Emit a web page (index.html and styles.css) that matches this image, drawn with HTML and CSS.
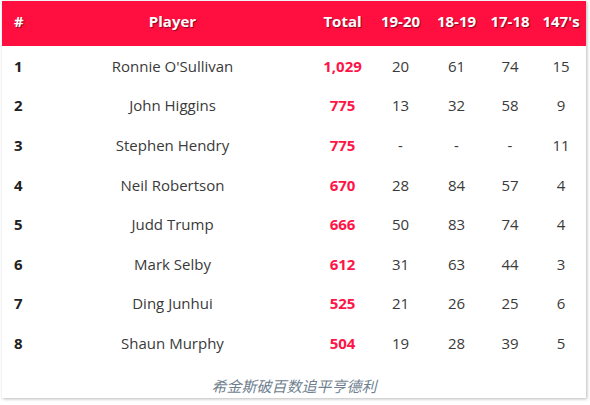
FILE: index.html
```html
<!DOCTYPE html>
<html lang="en">
<head>
<meta charset="utf-8">
<link rel="stylesheet" href="styles.css">
</head>
<body>
<div class="card">
<table class="ranking">
<colgroup>
<col class="c-rank"><col class="c-player"><col class="c-total"><col class="c-s1"><col class="c-s2"><col class="c-s3"><col class="c-max">
</colgroup>
<thead>
<tr><th class="rank">#</th><th>Player</th><th>Total</th><th>19-20</th><th>18-19</th><th>17-18</th><th>147's</th></tr>
</thead>
<tbody>
<tr><td class="rank">1</td><td>Ronnie O'Sullivan</td><td class="total">1,029</td><td>20</td><td>61</td><td>74</td><td>15</td></tr>
<tr><td class="rank">2</td><td>John Higgins</td><td class="total">775</td><td>13</td><td>32</td><td>58</td><td>9</td></tr>
<tr><td class="rank">3</td><td>Stephen Hendry</td><td class="total">775</td><td>-</td><td>-</td><td>-</td><td>11</td></tr>
<tr><td class="rank">4</td><td>Neil Robertson</td><td class="total">670</td><td>28</td><td>84</td><td>57</td><td>4</td></tr>
<tr><td class="rank">5</td><td>Judd Trump</td><td class="total">666</td><td>50</td><td>83</td><td>74</td><td>4</td></tr>
<tr><td class="rank">6</td><td>Mark Selby</td><td class="total">612</td><td>31</td><td>63</td><td>44</td><td>3</td></tr>
<tr><td class="rank">7</td><td>Ding Junhui</td><td class="total">525</td><td>21</td><td>26</td><td>25</td><td>6</td></tr>
<tr><td class="rank">8</td><td>Shaun Murphy</td><td class="total">504</td><td>19</td><td>28</td><td>39</td><td>5</td></tr>
</tbody>
</table>
<p class="caption">希金斯破百数追平亨德利</p>
</div>
</body>
</html>
```
FILE: styles.css
```css
html, body {
  margin: 0;
  padding: 0;
  background: #ffffff;
}
body {
  font-family: "Open Sans", "Noto Sans", sans-serif;
  font-size: 15px;
  color: #3a3a3a;
}
.card {
  margin: 1px 4px 7px 2px;
  width: 584px;
  height: 397px;
  background: #fff;
  box-shadow: 1px 1px 3px rgba(0,0,0,0.28);
  display: flex;
  flex-direction: column;
}
.ranking {
  border-collapse: collapse;
  table-layout: fixed;
  width: 584px;
}
.c-rank { width: 30px; }
.c-player { width: 281px; }
.c-total { width: 59px; }
.c-s1 { width: 57px; }
.c-s2 { width: 55px; }
.c-s3 { width: 52px; }
.c-max { width: 50px; }
thead tr {
  background: #ff0f3f;
  height: 45px;
}
th {
  color: #fff;
  font-weight: 700;
  font-size: 15px;
  text-align: center;
  padding: 0 0 5px 0;
  white-space: nowrap;
  text-shadow: 1px 1px 1px rgba(90,0,20,0.7);
}
tbody tr {
  height: 39.6px;
}
td {
  text-align: center;
  padding: 0;
  white-space: nowrap;
}
th.rank, td.rank {
  text-align: left;
  padding-left: 12px;
}
td.rank {
  font-weight: 700;
  color: #222;
}
td.total {
  color: #ff1447;
  font-weight: 700;
}
.caption {
  margin: 0;
  flex: 1;
  display: flex;
  align-items: center;
  justify-content: center;
  padding-top: 11px;
  font-style: italic;
  font-size: 15px;
  color: #6f7f8f;
  font-family: "Noto Sans CJK SC", sans-serif;
}
```
